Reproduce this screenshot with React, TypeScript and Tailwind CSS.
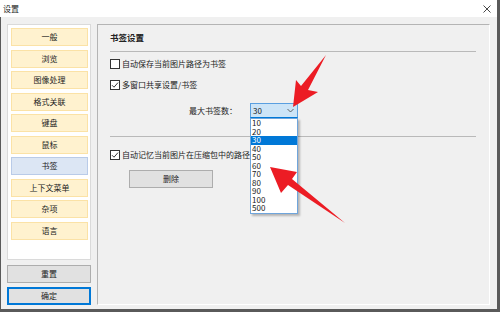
import React from 'react';

const navItems = ['一般', '浏览', '图像处理', '格式关联', '键盘', '鼠标', '书签', '上下文菜单', '杂项', '语言'];
const counts = ['10', '20', '30', '40', '50', '60', '70', '80', '90', '100', '500'];

const CheckBox = ({ checked }: { checked: boolean }) => (
  <span className="w-[10px] h-[10px] border border-[#333] bg-white flex items-center justify-center shrink-0">
    {checked && (
      <svg width="8" height="8" viewBox="0 0 8 8">
        <path d="M1 4.2 L3 6.2 L7 1.6" fill="none" stroke="#222" strokeWidth="0.9" />
      </svg>
    )}
  </span>
);

const CheckRow = (props: { checked: boolean; label: string; className?: string }) => (
  <div className={`flex items-center gap-[2px] h-[12px] whitespace-nowrap ${props.className ?? ''}`}>
    <CheckBox checked={props.checked} />
    <span className="leading-[12px]">{props.label}</span>
  </div>
);

export default function App() {
  return (
    <div className="relative w-[500px] h-[312px] flex flex-col bg-white border-r-[3px] border-[#5a5a5a] text-[8px] text-[#222] overflow-hidden font-['Noto_Sans_CJK_SC','Noto_Sans',sans-serif]">
      {/* title bar */}
      <div className="h-[17px] flex items-center justify-between pl-[3px] pr-[6px] shrink-0">
        <span className="leading-[10px]">设置</span>
        <svg width="8" height="8" viewBox="0 0 8 8">
          <path d="M0.5 0.5 L7.5 7.5 M7.5 0.5 L0.5 7.5" stroke="#333" strokeWidth="0.9" />
        </svg>
      </div>

      <div className="flex-1 flex bg-[#f0f0f0] border-l border-b-[3px] border-[#5a5a5a] pl-[6px] pr-[7px] pt-[7px] pb-[4px] gap-[6px]">
        {/* left column */}
        <div className="w-[84px] flex flex-col shrink-0">
          <div className="h-[236px] bg-white border border-[#dadada] pl-[3px] pr-[2px] pt-[3px] flex flex-col gap-[3.5px]">
            {navItems.map((n) => (
              <div
                key={n}
                className={`h-[18px] flex items-center justify-center border ${
                  n === '书签' ? 'bg-[#dce6f4] border-[#b9cbe8]' : 'bg-[#fff2cf] border-[#fbe2a6]'
                }`}
              >
                {n}
              </div>
            ))}
          </div>
          <div className="mt-[5px] h-[18px] flex items-center justify-center bg-[#e1e1e1] border border-[#adadad]">重置</div>
          <div className="mt-[4px] h-[18px] flex items-center justify-center bg-[#e1e1e1] border-2 border-[#0078d7]">确定</div>
        </div>

        {/* right panel */}
        <div className="flex-1 border border-t-[#b4b4b4] border-l-[#b4b4b4] border-r-white border-b-white pl-[12px] pr-[13px] flex flex-col">
          <div className="mt-[6px] h-[12px] leading-[12px] font-bold text-[8.5px]">书签设置</div>
          <div className="mt-[8px] border-t border-[#b9b9b9]" />
          <CheckRow className="mt-[6px]" checked={false} label="自动保存当前图片路径为书签" />
          <CheckRow className="mt-[9px]" checked={true} label="多窗口共享设置/书签" />

          <div className="mt-[12px] flex items-center h-[15px]">
            <span className="ml-[79px] w-[61px] leading-[12px]">最大书签数：</span>
            <div className="relative w-[48px] h-[15px]">
              <div className="h-full bg-[#cce4f7] border border-[#5a9fe0] border-b-[#0078d7] flex items-center justify-between pl-[2px] pr-[3px]">
                <span className="leading-[10px]">30</span>
                <svg width="7" height="5" viewBox="0 0 7 5">
                  <path d="M0.5 1 L3.5 4 L6.5 1" fill="none" stroke="#444" strokeWidth="0.8" />
                </svg>
              </div>
              <div className="absolute left-0 top-full w-[48px] bg-white border border-[#6fa5dc] shadow-[2px_2px_2px_rgba(0,0,0,0.25)] z-10">
                {counts.map((c) => (
                  <div
                    key={c}
                    className={`h-[8.55px] leading-[8.55px] pl-[1px] ${c === '30' ? 'bg-[#0078d7] text-white' : ''}`}
                  >
                    {c}
                  </div>
                ))}
              </div>
            </div>
          </div>

          <div className="mt-[18px] border-t border-[#b9b9b9]" />
          <CheckRow className="mt-[12px]" checked={true} label="自动记忆当前图片在压缩包中的路径" />
          <div className="mt-[9px] ml-[19px] w-[84px] h-[18px] flex items-center justify-center bg-[#e1e1e1] border border-[#adadad]">
            删除
          </div>
        </div>
      </div>

      {/* annotation arrows */}
      <svg className="absolute inset-0 pointer-events-none z-20" width="500" height="312" viewBox="0 0 500 312">
        <polygon points="293,107 296,80 301,86 326,55 308,90 318,92" fill="#ec1c24" />
        <polygon points="270,167 297,172 292,179 345,223 288,185 281,193" fill="#ec1c24" />
      </svg>
    </div>
  );
}
